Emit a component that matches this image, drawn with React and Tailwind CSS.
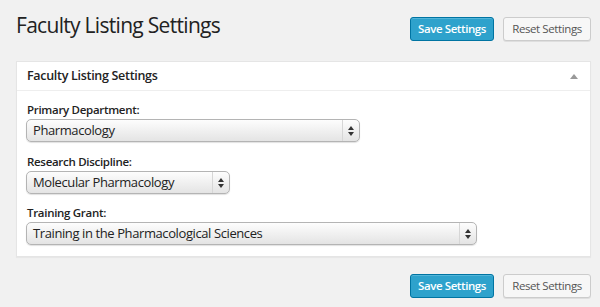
import React from "react";

const selectCls =
  "flex items-center h-[23px] rounded-[5px] border border-[#b4b4b4] bg-gradient-to-b from-[#fdfdfd] to-[#e4e4e4] shadow-[0_1px_1px_rgba(0,0,0,0.12)] text-[13px] tracking-[-0.4px] text-[#222]";

function Arrows() {
  return (
    <svg width="6" height="10" viewBox="0 0 6 10">
      <path d="M3 0 L6 4 L0 4 Z" fill="#333" />
      <path d="M3 10 L6 6 L0 6 Z" fill="#333" />
    </svg>
  );
}

function FakeSelect({ value, width }) {
  return (
    <div className={selectCls + " " + width}>
      <span className="flex-1 pl-[6px] leading-none">{value}</span>
      <span className="flex items-center justify-center w-[17px] h-full border-l border-[#d6d6d6]">
        <Arrows />
      </span>
    </div>
  );
}

function Buttons() {
  return (
    <div className="flex gap-[9px]">
      <button className="h-[24px] w-[84px] rounded-[3px] border border-[#0074a2] bg-[#2ea2cc] text-white text-[11.5px] font-semibold tracking-[-0.4px] shadow-[inset_0_1px_0_rgba(120,200,230,0.5)]">
        Save Settings
      </button>
      <button className="h-[24px] w-[88px] rounded-[3px] border border-[#cccccc] bg-[#f7f7f7] text-[#555] text-[11.5px] tracking-[-0.4px] shadow-[0_1px_0_rgba(0,0,0,0.08)]">
        Reset Settings
      </button>
    </div>
  );
}

function Field({ label, value, width, mt }) {
  return (
    <div className={mt}>
      <div className="text-[11.5px] font-semibold tracking-[-0.3px] text-[#222] leading-[13px] pl-[1px]">{label}</div>
      <div className="mt-[3px]">
        <FakeSelect value={value} width={width} />
      </div>
    </div>
  );
}

export default function App() {
  return (
    <div className="w-[600px] h-[307px] bg-[#f1f1f1] pl-[16px] pr-[9px] pt-[17px] font-['Open_Sans',sans-serif] text-[#222]">
      <div className="flex items-start justify-between">
        <h1 className="-mt-[4px] text-[21px] leading-[24px] tracking-[-0.7px] text-[#222]">Faculty Listing Settings</h1>
        <Buttons />
      </div>

      <div className="mt-[20px] bg-white border border-[#e5e5e5] shadow-[0_1px_1px_rgba(0,0,0,0.04)]">
        <div className="flex items-center justify-between h-[29px] border-b border-[#eeeeee] pl-[10px] pr-[12px]">
          <span className="text-[12.5px] font-semibold tracking-[-0.3px] text-[#222]">Faculty Listing Settings</span>
          <svg width="8" height="5" viewBox="0 0 8 5">
            <path d="M4 0 L8 5 L0 5 Z" fill="#999" />
          </svg>
        </div>
        <div className="pl-[9px] pt-[12px] pb-[11px]">
          <Field label="Primary Department:" value="Pharmacology" width="w-[334px]" mt="" />
          <Field label="Research Discipline:" value="Molecular Pharmacology" width="w-[204px]" mt="mt-[13px]" />
          <Field label="Training Grant:" value="Training in the Pharmacological Sciences" width="w-[451px]" mt="mt-[12px]" />
        </div>
      </div>

      <div className="flex justify-end mt-[17px]">
        <Buttons />
      </div>
    </div>
  );
}
